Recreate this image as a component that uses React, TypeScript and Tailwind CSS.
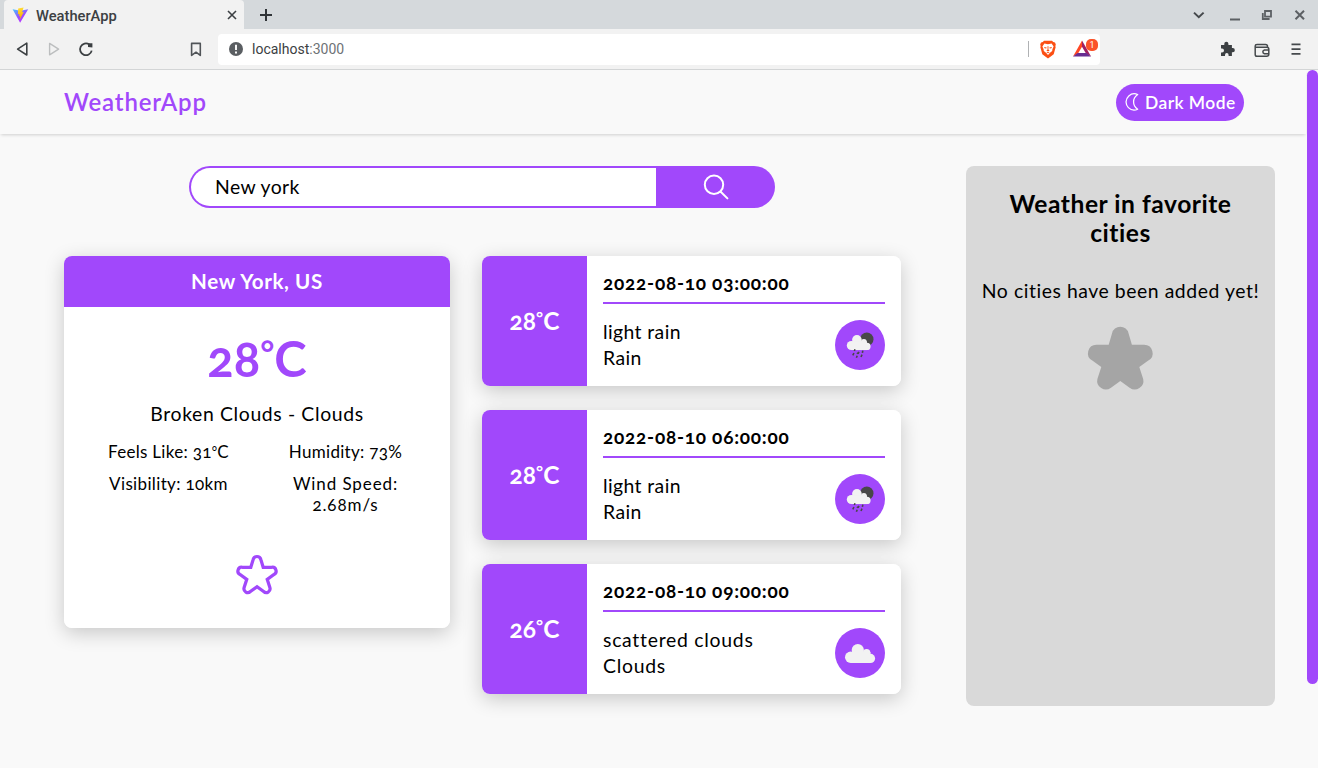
import type { ReactNode } from "react";
import clsx from "clsx";

const STAR =
  "M20.7 17.7 L24 6.4 A8.5 8.5 0 0 1 40.6 6.4 L43.9 17.7 H56 A8.5 8.5 0 0 1 60.3 33.6 L51.3 40 L55.2 52 A8.6 8.6 0 0 1 41.6 60.7 L32.3 54 L23 60.7 A8.6 8.6 0 0 1 9.4 52 L13.3 40 L4.3 33.6 A8.5 8.5 0 0 1 8.6 17.7 Z";

const STAR_OUTLINE =
  "M22.3 19.8 L26.1 7.2 A6.4 6.4 0 0 1 38.5 7.2 L42.3 19.8 H56 A6.2 6.2 0 0 1 59.2 31.7 L48.8 39.3 L53.2 52.9 A6.2 6.2 0 0 1 43 59 L32.3 51.2 L21.6 59 A6.2 6.2 0 0 1 11.4 52.9 L15.8 39.3 L5.4 31.7 A6.2 6.2 0 0 1 8.6 19.8 Z";

function ViteIcon() {
  return (
    <svg width="17" height="17" viewBox="0 0 17 17">
      <defs>
        <linearGradient id="vite-body" x1="0" y1="0" x2="0.6" y2="1">
          <stop offset="0" stopColor="#41c8ff" />
          <stop offset="0.6" stopColor="#9a4dff" />
          <stop offset="1" stopColor="#bd34fe" />
        </linearGradient>
        <linearGradient id="vite-bolt" x1="0" y1="0" x2="0" y2="1">
          <stop offset="0" stopColor="#ffdd35" />
          <stop offset="1" stopColor="#ffa800" />
        </linearGradient>
      </defs>
      <path d="M.6 2.2 8.1 15.7 16.2 2.2 8.3 3.7Z" fill="url(#vite-body)" />
      <path d="M11.6.4 6.2 1.5 5.9 7.2 7.4 7 7 9.2 8.2 8.9 7.8 12.4 11.8 5 10 5.3Z" fill="url(#vite-bolt)" />
    </svg>
  );
}

function TabStrip() {
  return (
    <div className="flex h-[29px] bg-[#d5d9dc] pl-1">
      <div className="flex w-[240px] items-center rounded-t bg-[#f2f2f2] pt-px pl-[8px] pr-[7px]">
        <ViteIcon />
        <span className="ml-[7px] flex-1 pt-px font-[Roboto,sans-serif] text-[14.7px] leading-4 font-medium text-[#3c4043]">WeatherApp</span>
        <svg width="10" height="10" viewBox="0 0 10 10" stroke="#3c4043" strokeWidth="1.6">
          <path d="M1 1 9 9M9 1 1 9" />
        </svg>
      </div>
      <div className="flex flex-1 items-center pl-[16px]">
        <svg width="12" height="12" viewBox="0 0 12 12" stroke="#303438" strokeWidth="2">
          <path d="M6 0V12M0 6H12" />
        </svg>
      </div>
      <div className="flex items-center pr-[13px]">
        <svg width="112" height="14" viewBox="0 0 112 14" fill="none" stroke="#5c6064" strokeWidth="2">
          <path d="M1 4.6 5.8 9.2 10.6 4.6" stroke="#45494c" />
          <path d="M37 11.5H47" />
          <path d="M72 3H78V8.6H72ZM69.8 5V11H76.6" strokeWidth="1.8" />
          <path d="M102.5 2.8 111 11.2M111 2.8 102.5 11.2" />
        </svg>
      </div>
    </div>
  );
}

function BraveIcon() {
  return (
    <svg width="16" height="19" viewBox="0 0 16 19">
      <path d="M4 .8H12L13.2 2.1 15 2.4 15.8 4.4 15.3 6.2 15.7 7.1 13.7 14.2 8 18.4 2.3 14.2.3 7.1.7 6.2.2 4.4 1 2.4 2.8 2.1Z" fill="#fb4f14" />
      <path d="M4.4 3.6 8 4.2 11.6 3.6 13.6 6.6 12.4 9.2 12.2 11 10 12.8 8 14.9 6 12.8 3.8 11 3.6 9.2 2.4 6.6Z" fill="#fff" />
      <path d="M4 6.9 6.7 7.5 6.2 8.4 4.7 8.2ZM12 6.9 9.3 7.5 9.8 8.4 11.3 8.2ZM7.5 6.2H8.5L8.4 9.4 9.6 10.5 8 11.6 6.4 10.5 7.6 9.4ZM6.3 12.3 8 11.9 9.7 12.3 8 13.3Z" fill="#fb4f14" />
    </svg>
  );
}

function Toolbar() {
  return (
    <div className="flex h-[41px] items-center border-b border-[#d3d5d6] bg-[#f2f2f2]">
      <svg className="ml-4" width="80" height="16" viewBox="0 0 80 16" fill="none" stroke="#3c4043" strokeWidth="1.6" strokeLinejoin="round">
        <path d="M10.8 2.2V14L1.6 8.1Z" />
        <path d="M33.6 2.4V13.8L42.6 8.1Z" stroke="#bcbebf" strokeWidth="1.4" />
        <path d="M73.3 3.4A5.9 5.9 0 1 0 75.7 9.6" strokeWidth="1.8" />
        <path d="M72 2.3 76.4 2.2V6.6L72 6Z" fill="#3c4043" stroke="none" />
      </svg>
      <svg className="ml-[94px]" width="12" height="15" viewBox="0 0 12 15" fill="none" stroke="#505458" strokeWidth="1.6" strokeLinejoin="round">
        <path d="M1.6 1.4H10.3V13.4L6 10.2 1.6 13.4Z" />
      </svg>
      <div className="ml-4 flex h-[31px] w-[882px] items-center rounded bg-white pl-[11px]">
        <svg width="14" height="14" viewBox="0 0 14 14">
          <circle cx="7" cy="7" r="7" fill="#5a5e62" />
          <path d="M7 2.8V8M7 9.6V11.4" stroke="#fff" strokeWidth="1.9" />
        </svg>
        <span className="ml-[9px] flex-1 font-[Roboto,sans-serif] text-[14px] leading-4 text-[#3c4043]">
          localhost<span className="text-[#6e7276]">:3000</span>
        </span>
        <div className="mr-[11px] h-4 w-px bg-[#b0b2b4]" />
        <BraveIcon />
        <div className="relative ml-[16px] h-[18px] w-[28px]">
          <svg width="20" height="17" viewBox="0 0 20 17">
            <path d="M10 .6 1 16.5 6 13.4 10 6.7Z" fill="#ff4724" />
            <path d="M10 .6 19 16.5 14 13.4 10 6.7Z" fill="#9e1f63" />
            <path d="M1 16.5H19L14.4 13H5.6Z" fill="#662d91" />
          </svg>
          <span className="absolute -top-px left-[14px] flex h-3 w-3 items-center justify-center rounded-[5px] bg-[#fb542b] font-[Roboto,sans-serif] text-[9px] leading-none text-white">1</span>
        </div>
      </div>
      <svg className="ml-[119px]" width="82" height="18" viewBox="0 0 82 18" fill="none" stroke="#45494c" strokeWidth="1.7">
        <path
          d="M2 5H5.3V3.7A2 2 0 0 1 9.4 3.7V5H12.9V8.1H13.8A2 2 0 0 1 13.8 12.2H12.9V16H9.6V14.9A1.8 1.8 0 0 0 6 14.9V16H2V12.5H3A1.9 1.9 0 0 0 3 8.5H2Z"
          fill="#3c4043"
          stroke="none"
        />
        <path d="M48.5 7V6.3Q48.5 4.5 46.5 4.5H38Q36.2 4.5 36.2 6.1V14.4Q36.2 16.2 38 16.2H47.6Q49.8 16.2 49.8 14.2V9.2Q49.8 7.2 47.8 7.2H36.4M50 9.9H45.4A2 2 0 0 0 45.4 13.8H50" strokeWidth="1.5" />
        <path d="M72.5 4.3H81.5M72.5 9.1H81.5M72.5 13.9H81.5" />
      </svg>
    </div>
  );
}

function Header() {
  return (
    <header className="flex h-16 items-center justify-between pr-[62px] pl-16 shadow-[0_2px_3px_-1px_rgba(0,0,0,0.17)]">
      <h1 className="text-[24px] leading-7 font-semibold tracking-[0.85px] text-[#a148fb]">WeatherApp</h1>
      <button className="mt-px flex h-[37px] w-32 items-center rounded-full bg-[#a148fb] pl-[9px] text-white">
        <svg className="-mt-px" width="14" height="18" viewBox="0 0 14 18" fill="none" stroke="currentColor" strokeWidth="1.25" strokeLinejoin="round">
          <path d="M12.7 1.6C10.2.4 6.5.5 3.8 3 .2 6.3.2 11.4 3.4 14.6 6 17.1 9.8 17.6 12.7 16.2 7.2 12.4 7.2 5.4 12.7 1.6Z" />
        </svg>
        <span className="ml-[6px] text-[17.4px] leading-5 font-semibold tracking-[0.45px] whitespace-nowrap">Dark Mode</span>
      </button>
    </header>
  );
}

function SearchBar() {
  return (
    <div className="ml-[125px] flex h-[42px] w-[586px] rounded-full bg-[#a148fb] py-0.5 pl-0.5">
      <div className="flex flex-1 items-center rounded-l-full bg-white pl-6 text-[19.4px] leading-6 tracking-[0.4px] text-black">New york</div>
      <div className="flex w-[119px] items-center justify-center">
        <svg width="26" height="26" viewBox="0 0 26 26" fill="none" stroke="#fff" strokeWidth="2" strokeLinecap="round">
          <circle cx="11" cy="10.8" r="9.2" />
          <path d="M17.7 17.7 24.4 24.4" />
        </svg>
      </div>
    </div>
  );
}

function Degree({ value, size }: { value: number; size: string }) {
  return (
    <span>
      {value}
      <span className={clsx("inline-block leading-none", size)}>°</span>C
    </span>
  );
}

function Stat({ children, className }: { children: ReactNode; className: string }) {
  return <p className={clsx("px-4 text-[17px] leading-[21px]", className)}>{children}</p>;
}

function CurrentWeather() {
  return (
    <section className="flex h-[372px] w-[386px] flex-col overflow-hidden rounded-lg bg-white text-center text-black">
      <h2 className="flex h-[51px] shrink-0 items-center justify-center bg-[#a148fb] pb-0.5 text-[20.6px] leading-6 font-bold tracking-[0.6px] text-white">New York, US</h2>
      <p className="mt-[23px] h-14 text-[49px] leading-14 font-bold text-[#a148fb]">
        <Degree value={28} size="-translate-y-[11px] text-[34px]" />
      </p>
      <p className="mt-4 text-[19.4px] leading-6 tracking-[0.63px]">Broken Clouds - Clouds</p>
      <div className="mx-4 mt-[15px] grid grid-cols-2 gap-y-[11px]">
        <Stat className="tracking-[0.3px]">
          Feels Like: <Degree value={31} size="-translate-y-[2px] text-[13px]" />
        </Stat>
        <Stat className="tracking-[0.3px]">Humidity: 73%</Stat>
        <Stat className="tracking-[0.35px]">Visibility: 10km</Stat>
        <Stat className="tracking-[0.9px]">
          Wind Speed: <br />
          2.68m/s
        </Stat>
      </div>
      <svg className="mx-auto mt-[40px] overflow-visible" width="40" height="39.3" viewBox="0 0 64.6 63.4" fill="none" stroke="#a148fb" strokeWidth="5.2">
        <path d={STAR_OUTLINE} />
      </svg>
    </section>
  );
}

function CloudShape() {
  return (
    <g fill="#f2f2f2">
      <circle cx="15.7" cy="29.3" r="5.7" />
      <circle cx="22.8" cy="22.1" r="6.1" />
      <circle cx="31.6" cy="24.6" r="3.7" />
      <circle cx="35.5" cy="30.4" r="4.6" />
      <rect x="15.7" y="24" width="19.8" height="11" />
    </g>
  );
}

function RainIcon() {
  return (
    <svg width="50" height="50" viewBox="0 0 50 50">
      <circle cx="31.8" cy="19.2" r="6.7" fill="#484848" />
      <g transform="translate(3.9 2.4) scale(0.79)">
        <CloudShape />
      </g>
      <path d="M20 29.3 19.3 31M24 31.8 23 33.8M27.8 30.6 27.4 32.8M18.9 33 17.8 35.4M22.8 32.6 22.2 34M27 34.6 26 37M22.2 35.8 21.4 37.8" stroke="#484848" strokeWidth="1.6" />
    </svg>
  );
}

function CloudIcon() {
  return (
    <svg width="50" height="50" viewBox="0 0 50 50">
      <CloudShape />
    </svg>
  );
}

type Forecast = { temp: number; time: string; description: string; main: string; icon: ReactNode; tracking: string };

const FORECASTS: Forecast[] = [
  { temp: 28, time: "2022-08-10 03:00:00", description: "light rain", main: "Rain", icon: <RainIcon />, tracking: "tracking-[0.4px]" },
  { temp: 28, time: "2022-08-10 06:00:00", description: "light rain", main: "Rain", icon: <RainIcon />, tracking: "tracking-[0.4px]" },
  { temp: 26, time: "2022-08-10 09:00:00", description: "scattered clouds", main: "Clouds", icon: <CloudIcon />, tracking: "tracking-[0.73px]" },
];

function ForecastCard({ temp, time, description, main, icon, tracking }: Forecast) {
  return (
    <article className="flex h-[130px] overflow-hidden rounded-lg bg-white text-black">
      <div className="flex w-[105px] items-center justify-center bg-[#a148fb] text-[24.5px] font-bold text-white">
        <Degree value={temp} size="-translate-y-[6px] text-[17px]" />
      </div>
      <div className="flex-1 px-4 pt-[15px]">
        <h3 className="h-[33px] border-b-2 border-[#a148fb] text-[19px] leading-6 font-bold tracking-[0.75px]">{time}</h3>
        <div className="mt-[15px] flex items-start justify-between">
          <div className={clsx("text-[19.4px] leading-[26px]", tracking)}>
            <p>{description}</p>
            <p>{main}</p>
          </div>
          <div className="mt-px h-[50px] w-[50px] rounded-full bg-[#a148fb]">{icon}</div>
        </div>
      </div>
    </article>
  );
}

function Favorites() {
  return (
    <aside className="flex h-[540px] w-[309px] flex-col items-center rounded-lg bg-[#d9d9d9] pt-[23px] text-center text-black">
      <h2 className="w-[260px] text-[24.6px] leading-[29px] font-bold tracking-[0.53px]">Weather in favorite cities</h2>
      <p className="mt-8 text-[19.4px] leading-6 tracking-[0.55px] whitespace-nowrap">No cities have been added yet!</p>
      <svg className="mt-6 overflow-visible" width="64.6" height="63" viewBox="0 0 64.6 63" fill="#a5a5a5">
        <path d={STAR} />
      </svg>
    </aside>
  );
}

export default function App() {
  return (
    <div className="flex h-[768px] w-full flex-col overflow-hidden bg-[#f9f9f9]">
      <TabStrip />
      <Toolbar />
      <div className="flex flex-1 font-[Lato,sans-serif] oldstyle-nums">
        <div className="w-[1306px]">
          <Header />
          <main className="flex gap-[65px] pt-8 pl-16">
            <div className="flex w-[837px] flex-col gap-12">
              <SearchBar />
              <div className="flex items-start gap-8">
                <div className="rounded-lg shadow-[0_5px_20px_rgba(0,0,0,0.2)]">
                  <CurrentWeather />
                </div>
                <div className="flex flex-1 flex-col gap-6">
                  {FORECASTS.map((forecast) => (
                    <div key={forecast.time} className="rounded-lg shadow-[0_5px_20px_rgba(0,0,0,0.2)]">
                      <ForecastCard {...forecast} />
                    </div>
                  ))}
                </div>
              </div>
            </div>
            <Favorites />
          </main>
        </div>
        <div className="ml-px h-[614px] w-[11px] rounded-full bg-[#a148fb]" />
      </div>
    </div>
  );
}
